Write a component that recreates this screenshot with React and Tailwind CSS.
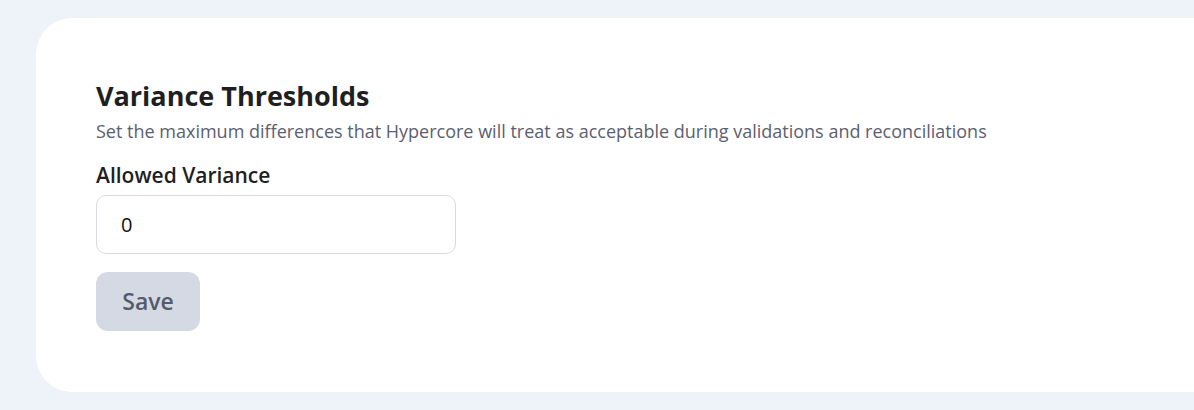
export default function App() {
  return (
    <div className="w-[1194px] h-[410px] bg-[#eef2f9] pt-[18px] pl-[36px] overflow-hidden" style={{ fontFamily: '"Open Sans", sans-serif' }}>
      <div className="bg-white rounded-l-[36px] h-[374px] w-[1200px] pl-[60px] pt-[60px]">
        <h2 className="text-[27px] leading-[36px] font-bold text-[#1f1f1f]">Variance Thresholds</h2>
        <p className="mt-[4px] text-[18px] leading-[26px] text-[#5b6070]">
          Set the maximum differences that Hypercore will treat as acceptable during validations and reconciliations
        </p>
        <label className="block mt-[17px] text-[21px] leading-[28px] font-semibold text-[#1f1f1f]">Allowed Variance</label>
        <input
          className="mt-[6px] block w-[360px] h-[59px] rounded-[10px] border border-[#d9dae3] px-[24px] text-[20px] text-[#111] outline-none"
          defaultValue="0"
        />
        <button className="mt-[18px] w-[104px] h-[59px] rounded-[12px] bg-[#d4d9e4] text-[23px] font-semibold text-[#555b6b]">
          Save
        </button>
      </div>
    </div>
  );
}
